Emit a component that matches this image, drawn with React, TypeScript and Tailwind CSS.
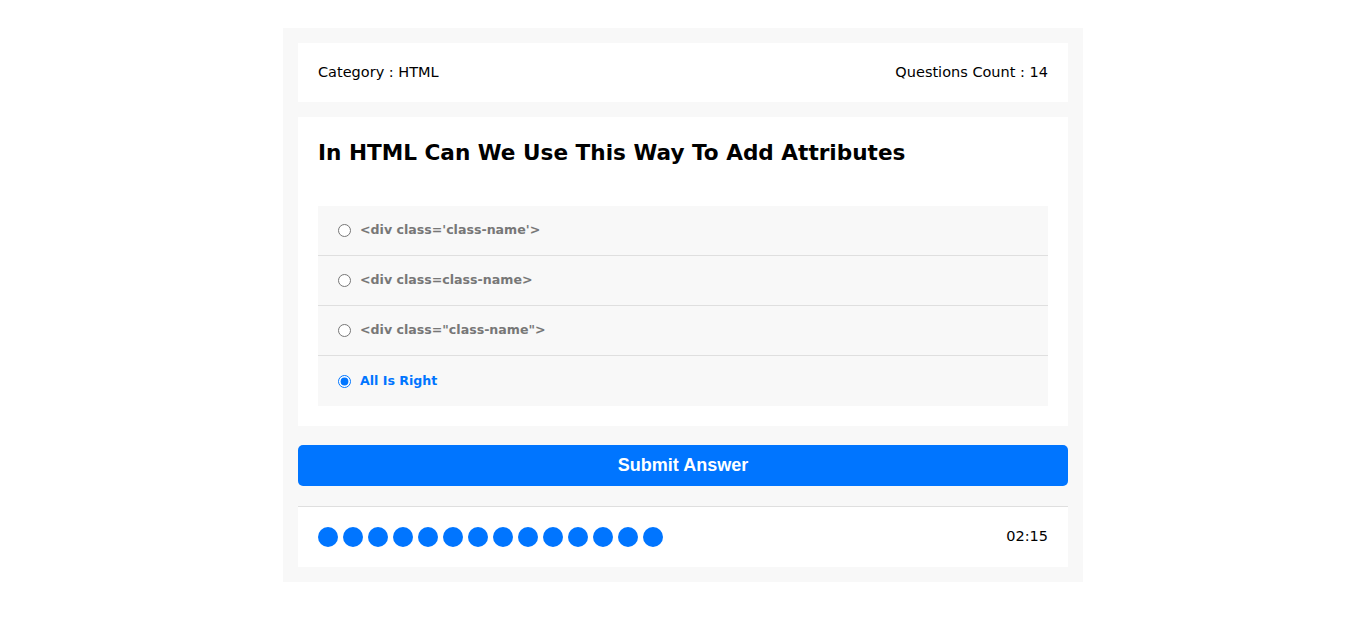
import { useState } from "react";

const answers = [
  "<div class='class-name'>",
  "<div class=class-name>",
  '<div class="class-name">',
  "All Is Right",
];

export default function App() {
  const [picked, setPicked] = useState(3);
  const font = { fontFamily: '"DejaVu Sans", Verdana, sans-serif' };

  return (
    <div className="min-h-screen bg-white pt-[28px]" style={font}>
      <div className="mx-auto w-[800px] bg-[#f8f8f8] p-[15px]">
        {/* info */}
        <div className="flex h-[59px] items-center justify-between bg-white px-[20px] text-[14.5px] text-black">
          <div>Category : HTML</div>
          <div>Questions Count : 14</div>
        </div>

        {/* question */}
        <div className="mt-[15px] bg-white p-[20px]">
          <h2 className="mb-[37px] flex h-[32px] items-center text-[21.6px] font-bold text-black">
            In HTML Can We Use This Way To Add Attributes
          </h2>
          <div className="bg-[#f8f8f8]">
            {answers.map((a, i) => (
              <label
                key={i}
                className={
                  "flex h-[50px] cursor-pointer items-center px-[20px] " +
                  (i < answers.length - 1 ? "border-b border-[#dfdfdf]" : "")
                }
              >
                <input
                  type="radio"
                  name="q"
                  checked={picked === i}
                  onChange={() => setPicked(i)}
                  className="m-0 h-[13px] w-[13px] accent-[#0075ff]"
                />
                <span
                  className={
                    "ml-[9px] text-[12.6px] font-bold " +
                    (picked === i ? "text-[#0075ff]" : "text-[#777]")
                  }
                >
                  {a}
                </span>
              </label>
            ))}
          </div>
        </div>

        {/* submit */}
        <button
          type="button"
          className="mt-[19px] block h-[41px] w-full rounded-[5px] bg-[#0075ff] text-[18px] font-bold text-white"
          style={{ fontFamily: '"Liberation Sans", Arial, sans-serif' }}
        >
          Submit Answer
        </button>

        {/* bullets */}
        <div className="mt-[20px] flex h-[61px] items-center justify-between border-t border-[#dfdfdf] bg-white px-[20px]">
          <div className="flex gap-[5px]">
            {Array.from({ length: 14 }).map((_, i) => (
              <span key={i} className="block h-[20px] w-[20px] rounded-full bg-[#0075ff]" />
            ))}
          </div>
          <div className="text-[14.5px] text-black">02:15</div>
        </div>
      </div>
    </div>
  );
}
